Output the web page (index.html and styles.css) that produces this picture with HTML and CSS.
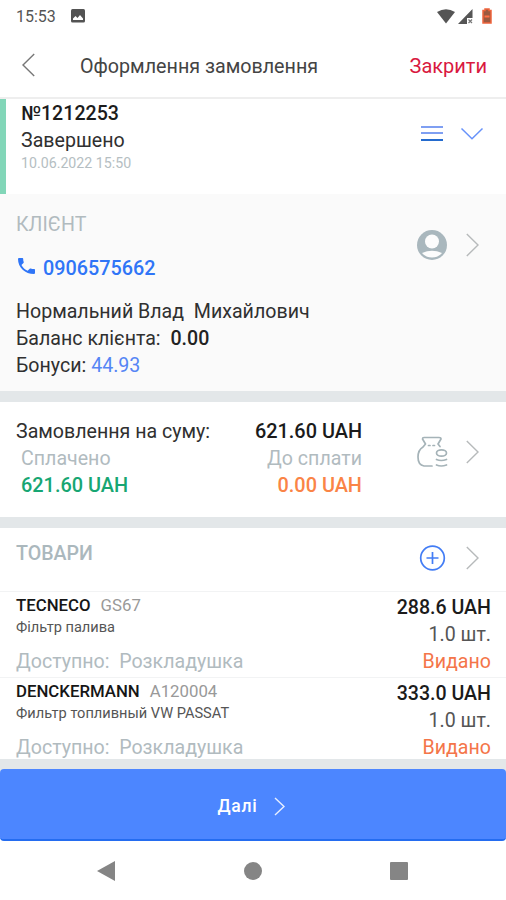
FILE: index.html
```html
<!DOCTYPE html>
<html lang="uk">
<head>
<meta charset="utf-8">
<title>Оформлення замовлення</title>
<link rel="stylesheet" href="styles.css">
</head>
<body>
<div class="status-bar">
  <span class="clock">15:53</span>
  <svg class="status-picture" width="14" height="14" viewBox="0 0 14 14"><rect width="14" height="13.5" rx="1.5" fill="#535353"/><path d="M2 11V9.5L4.5 7l2 2L9 6l3 3.500V11z" fill="#fff"/></svg>
  <div class="status-icons">
    <svg width="18" height="15" viewBox="0 0 18 15"><path d="M0 3Q9-2.500 18 3L9 14.500z" fill="#555"/></svg>
    <svg width="15" height="15" viewBox="0 0 15 15"><path d="M0 15L14.500 0V9H9V15z" fill="#555"/><path d="M10.500 10.500l3.500 3.500m0-3.500l-3.500 3.500" stroke="#777" stroke-width="1.200"/></svg>
    <svg width="10" height="16" viewBox="0 0 10 16"><path d="M3 1h4v1.500h2V15H1V2.500h2z" fill="#9b5940" stroke="#f0643c" stroke-width="1.500"/><path d="M2.500 7.500h5v2h-5z" fill="#ff7047"/></svg>
  </div>
</div>
<header class="toolbar">
  <svg class="back" width="13" height="24" viewBox="0 0 13 24"><path d="M12.200 1L1 12l11.200 11" fill="none" stroke="#777" stroke-width="1.400"/></svg>
  <h1 class="title">Оформлення замовлення</h1>
  <span class="close">Закрити</span>
</header>
<section class="order">
  <div class="order-info">
    <div class="order-number">№1212253</div>
    <div class="order-state">Завершено</div>
    <div class="order-date">10.06.2022 15:50</div>
  </div>
  <div class="actions">
    <svg class="action-icon" width="30" height="30" viewBox="0 0 30 30"><path d="M4 8h22M4 14h22" stroke="#7f9ff2" stroke-width="2"/><path d="M4 21h22" stroke="#246bce" stroke-width="2"/></svg>
    <svg class="chevron-down" width="24" height="14" viewBox="0 0 24 14"><path d="M1.500 1.500L12 11.800 22.500 1.500" fill="none" stroke="#6792fa" stroke-width="1.500"/></svg>
  </div>
</section>
<section class="client">
  <div class="client-body">
    <div class="section-label">КЛІЄНТ</div>
    <div class="phone">
      <svg width="17" height="16" viewBox="3 3 18 18" preserveAspectRatio="none"><path d="M6.620 10.790c1.440 2.830 3.760 5.140 6.590 6.590l2.200-2.200c.27-.27.67-.36 1.020-.24 1.120.37 2.330.57 3.570.57.55 0 1 .45 1 1V20c0 .55-.45 1-1 1C10.610 21 3 13.390 3 4c0-.55.45-1 1-1h3.500c.55 0 1 .45 1 1 0 1.250.2 2.450.57 3.570.11.35.03.74-.25 1.020z" fill="#2f75f7"/></svg>
      <span class="phone-number">0906575662</span>
    </div>
    <div class="client-name">Нормальний Влад&nbsp; Михайлович</div>
    <div class="client-balance">Баланс клієнта: <b>0.00</b></div>
    <div class="client-bonus">Бонуси: <span class="bonus">44.93</span></div>
  </div>
  <div class="actions client-actions">
    <svg class="action-icon" width="30" height="30" viewBox="0 0 30 30"><circle cx="15" cy="15" r="15" fill="#a9b7bd"/><circle cx="15" cy="11.500" r="7" fill="#fcfcfc"/><path d="M5 23Q15 18.500 25 23Q21 27.500 15 27.500T5 23z" fill="#fcfcfc"/></svg>
    <svg class="chevron" width="13" height="24" viewBox="0 0 13 24"><path d="M.8 1L12 12 .8 23" fill="none" stroke="#b7babb" stroke-width="1.400"/></svg>
  </div>
</section>
<section class="total">
  <div class="total-body">
    <div class="total-row"><span class="sum-label">Замовлення на суму:</span><b class="sum">621.60 UAH</b></div>
    <div class="total-row inset"><span class="paid-label">Сплачено</span><span class="due-label">До сплати</span></div>
    <div class="total-row inset"><b class="paid">621.60 UAH</b><b class="due">0.00 UAH</b></div>
  </div>
  <div class="actions total-actions">
    <svg class="action-icon" width="32" height="32" viewBox="0 0 32 32" fill="none" stroke="#a5b3b8" stroke-width="1.700" stroke-linecap="round" stroke-linejoin="round"><path d="M16 30H8Q2 29 2 21Q2 14 7 11L9.500 8 6.500 3Q6.500 1.500 8 1.500H23Q25 1.500 25 3L22 8 24 10.500M12.500 9.500h1.500m3 0h1.500"/><ellipse cx="25.500" cy="17" rx="5" ry="3.200"/><path d="M20.500 23.500Q25 25.500 30.500 23.500M20.500 29Q25 31 30.500 29"/></svg>
    <svg class="chevron" width="13" height="24" viewBox="0 0 13 24"><path d="M.8 1L12 12 .8 23" fill="none" stroke="#b7babb" stroke-width="1.400"/></svg>
  </div>
</section>
<section class="goods">
  <div class="goods-head">
    <div class="goods-label">ТОВАРИ</div>
    <div class="actions goods-actions">
      <svg class="action-icon" width="30" height="30" viewBox="0 0 30 30" fill="none" stroke="#437df5"><circle cx="15.500" cy="15" r="11.800" stroke-width="1.700"/><path d="M9.500 15h12M15.500 9v12" stroke-width="1.700"/></svg>
      <svg class="chevron" width="13" height="24" viewBox="0 0 13 24"><path d="M.8 1L12 12 .8 23" fill="none" stroke="#b7babb" stroke-width="1.400"/></svg>
    </div>
  </div>
  <article class="item">
    <div class="item-main">
      <div class="item-title"><b class="brand">TECNECO</b><span class="sku">GS67</span></div>
      <div class="item-name">Фільтр палива</div>
      <div class="item-stock">Доступно:&nbsp; Розкладушка</div>
    </div>
    <div class="item-side">
      <b class="price">288.6 UAH</b>
      <span class="qty">1.0 шт.</span>
      <span class="issued">Видано</span>
    </div>
  </article>
  <article class="item item-last">
    <div class="item-main">
      <div class="item-title"><b class="brand">DENCKERMANN</b><span class="sku">A120004</span></div>
      <div class="item-name">Фильтр топливный VW PASSAT</div>
      <div class="item-stock">Доступно:&nbsp; Розкладушка</div>
    </div>
    <div class="item-side">
      <b class="price">333.0 UAH</b>
      <span class="qty">1.0 шт.</span>
      <span class="issued">Видано</span>
    </div>
  </article>
</section>
<div class="footer">
  <button class="next"><span>Далі</span><svg width="11" height="19" viewBox="0 0 11 19"><path d="M1 1l9 8.500L1 18" fill="none" stroke="#e8efff" stroke-width="1.400"/></svg></button>
</div>
<nav class="nav-bar">
  <svg width="18" height="20" viewBox="0 0 18 20"><path d="M18 0v20L0 10z" fill="#858585"/></svg>
  <svg width="18" height="18" viewBox="0 0 18 18"><circle cx="9" cy="9" r="9" fill="#858585"/></svg>
  <svg width="18" height="18" viewBox="0 0 18 18"><rect width="18" height="18" rx="1" fill="#858585"/></svg>
</nav>
</body>
</html>
```
FILE: styles.css
```css
* { box-sizing: border-box; }
body {
  margin: 0;
  width: 506px;
  height: 900px;
  overflow: hidden;
  background: #fff;
  color: #303030;
  font: 400 19.6px/27px Roboto, "Liberation Sans", sans-serif;
  white-space: nowrap;
}
svg { display: block; flex: none; }
b { font-weight: 500; }
.status-bar { display: flex; height: 32px; padding: 0 14px 0 16px; align-items: center; }
.clock { font-size: 16px; color: #555; }
.status-picture { margin-left: 15px; }
.status-icons { display: flex; margin-left: auto; gap: 3px; align-items: center; }
.status-icons svg:last-child { margin-left: 6px; }
.toolbar { display: flex; height: 67px; align-items: center; padding: 1px 19px 0 22px; border-bottom: 2px solid #eee; }
.title { margin: 0 0 0 45px; padding-top: 3px; font-size: 19.7px; font-weight: 400; color: #444; }
.close { margin-left: auto; padding-top: 2px; color: #d9193f; font-size: 20px; }
.order { display: flex; height: 95px; border-left: 6px solid #82d6b8; padding: 1px 0 0 15px; }
.order-number { color: #1c1c1c; font-weight: 500; }
.order-state { padding-top: 1px; line-height: 26px; }
.order-date { color: #b5bec2; font-size: 14.2px; line-height: 19px; }
.actions { display: flex; gap: 19px; align-items: center; margin-left: auto; padding-right: 27px; }
.order .actions { height: 68px; gap: 13px; padding-right: 22px; }
.client { display: flex; height: 197px; padding-left: 16px; background: #fafafa; }
.section-label { padding-top: 17px; color: #b1bbbf; }
.phone { display: flex; margin-top: 17px; align-items: center; gap: 8px; padding-left: 2px; color: #2f75f7; }
.phone svg { margin-top: -6px; }
.phone-number { font-size: 19.8px; font-weight: 500; }
.client-name { margin-top: 16px; }
.client-balance b { margin-left: 5px; color: #222; }
.bonus { color: #5585f5; }
.client-actions { height: 102px; }
.total { display: flex; height: 137px; border: solid #e3e7e9; border-width: 11px 0; padding-left: 16px; }
.total-body { width: 346px; padding-top: 16px; }
.total-body b { font-size: 19.9px; }
.total-row { display: flex; justify-content: space-between; }
.inset { padding-left: 5px; }
.sum { color: #1b1b1b; }
.paid-label, .due-label { color: #b1bbbf; }
.total-body .paid { color: #17a673; }
.total-body .due { color: #fa8446; }
.total-actions { height: 100px; gap: 18px; }
.goods-head { display: flex; height: 64px; padding-left: 16px; border-bottom: 1px solid #f2f3f4; }
.goods-label { padding-top: 12px; color: #abb8bd; font-weight: 500; }
.goods-actions { height: 60px; }
.item { display: flex; justify-content: space-between; height: 86px; padding: 0 15px 0 16px; border-bottom: 1px solid #f2f3f4; }
.item-last { height: 81px; border: 0; }
.item-title { display: flex; gap: 10px; font-size: 16.8px; }
.brand { color: #161616; }
.sku { color: #999; }
.item-name { font-size: 14.6px; line-height: 17px; color: #555; }
.item-stock { margin-top: 12px; color: #b1bbbf; }
.item-side { display: flex; flex-direction: column; align-items: flex-end; padding-top: 2px; }
.price { color: #1b1b1b; }
.qty { color: #555; }
.issued { color: #f47549; }
.footer { position: relative; height: 82px; padding-top: 10px; background: linear-gradient(#e3e7e9 15px, #fff 15px); }
.next { display: flex; width: 100%; height: 72px; justify-content: center; align-items: center; gap: 16px; padding: 4px 4px 0 0; border: 0; border-bottom: 2px solid #246cf0; border-radius: 4px; background: #4c86ff; color: #fff; font: 500 17.500px/27px Roboto, sans-serif; letter-spacing: .8px; }
.nav-bar { display: flex; height: 60px; justify-content: space-between; align-items: center; padding: 0 98px 1px 97px; }
```
